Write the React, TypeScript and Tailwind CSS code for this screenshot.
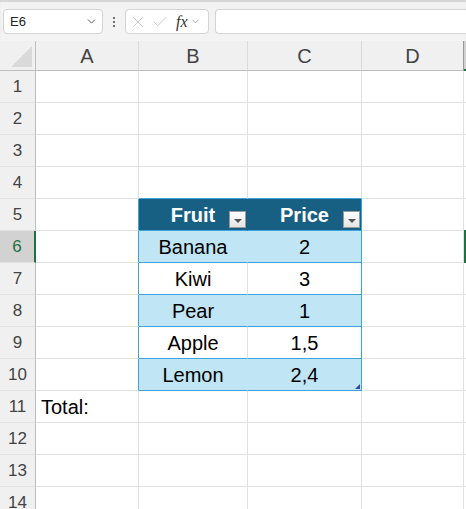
import { ChevronDown, X, Check } from "lucide-react";

const FONT = { fontFamily: '"Liberation Sans", Arial, sans-serif' };

const rows = [1, 2, 3, 4, 5, 6, 7, 8, 9, 10, 11, 12, 13, 14];

const data: Record<number, [string, string]> = {
  6: ["Banana", "2"],
  7: ["Kiwi", "3"],
  8: ["Pear", "1"],
  9: ["Apple", "1,5"],
  10: ["Lemon", "2,4"],
};

function FilterButton() {
  return (
    <span className="absolute right-[1px] bottom-[2px] flex h-[17px] w-[17px] items-center justify-center border border-[#9a9a9a] bg-gradient-to-b from-white to-[#e4e4e4]">
      <span className="mt-[3px] h-0 w-0 border-x-[4px] border-t-[4px] border-x-transparent border-t-[#555]" />
    </span>
  );
}

function Row({ n }: { n: number }) {
  const inTable = n >= 5 && n <= 10;
  const header = n === 5;
  const banded = n === 6 || n === 8 || n === 10;
  const selected = n === 6;
  const values = data[n];

  const tableBg = header ? "bg-[#175f83]" : banded ? "bg-[#c0e5f5]" : "bg-white";
  const bBorderB = inTable || n === 4 ? "border-b-[#3fa3db]" : "border-b-[#e1e1e1]";
  const bBorderR = header
    ? "border-r-[#175f83]"
    : banded
      ? "border-r-[#c0e5f5]"
      : "border-r-[#e1e1e1]";

  return (
    <div className="flex h-[32px]">
      <div
        className={`flex w-[36px] shrink-0 items-center justify-center border-b border-b-[#e1e1e1] text-[17px] ${
          selected
            ? "border-r-2 border-r-[#1e7145] bg-[#d2d2d2] text-[#1e7145]"
            : "border-r border-r-[#bdbdbd] bg-[#f0f0f0] text-[#444]"
        }`}
      >
        {n}
      </div>
      <div
        className={`flex w-[103px] shrink-0 items-center border-b border-b-[#e1e1e1] border-r pl-[5px] text-[20px] text-black ${
          inTable ? "border-r-[#3fa3db]" : "border-r-[#e1e1e1]"
        }`}
      >
        {n === 11 ? "Total:" : ""}
      </div>
      <div
        className={`relative flex w-[109px] shrink-0 items-center justify-center border-b border-r text-[20px] ${tableBg} ${bBorderB} ${bBorderR} ${
          header ? "font-bold text-white" : "text-black"
        }`}
      >
        {header ? "Fruit" : values ? values[0] : ""}
        {header && <FilterButton />}
      </div>
      <div
        className={`relative flex w-[114px] shrink-0 items-center justify-center border-b border-r text-[20px] ${tableBg} ${bBorderB} ${
          inTable ? "border-r-[#3fa3db]" : "border-r-[#e1e1e1]"
        } ${header ? "font-bold text-white" : "text-black"}`}
      >
        {header ? "Price" : values ? values[1] : ""}
        {header && <FilterButton />}
        {n === 10 && (
          <span className="absolute right-[1px] bottom-[1px] h-0 w-0 border-l-[5px] border-b-[5px] border-l-transparent border-b-[#3b45a8]" />
        )}
      </div>
      <div className="w-[102px] shrink-0 border-b border-r border-b-[#e1e1e1] border-r-[#e1e1e1]" />
      {selected ? (
        <div className="-mt-px h-[33px] flex-1 border-y-2 border-l-2 border-[#1e7145]" />
      ) : (
        <div className="flex-1 border-b border-b-[#e1e1e1]" />
      )}
    </div>
  );
}

export default function App() {
  return (
    <div className="h-[509px] w-[466px] overflow-hidden bg-white" style={FONT}>
      {/* formula bar */}
      <div className="flex h-[41px] items-start bg-[#f3f3f3] pt-[9px] shadow-[inset_0_2px_1px_#d6d6d6]">
        <div className="ml-[3px] flex h-[25px] w-[100px] items-center justify-between rounded-[4px] border border-[#d3d3d3] bg-white pl-[6px] pr-[4px] text-[13px] text-[#222]">
          <span>E6</span>
          <ChevronDown size={13} strokeWidth={1.6} className="text-[#444]" />
        </div>
        <div className="flex h-[25px] w-[22px] flex-col items-center justify-center gap-[2px]">
          <span className="h-[2px] w-[2px] rounded-full bg-[#444]" />
          <span className="h-[2px] w-[2px] rounded-full bg-[#444]" />
          <span className="h-[2px] w-[2px] rounded-full bg-[#444]" />
        </div>
        <div className="flex h-[25px] w-[84px] items-center rounded-[4px] border border-[#d3d3d3] bg-white pl-[3px] text-[#bdbdbd]">
          <X size={18} strokeWidth={1.1} />
          <Check size={18} strokeWidth={1.1} className="ml-[4px]" />
          <span
            className="ml-[7px] text-[16px] italic text-[#333]"
            style={{ fontFamily: '"Liberation Serif", serif' }}
          >
            fx
          </span>
          <ChevronDown size={11} strokeWidth={1.5} className="ml-[2px] text-[#888]" />
        </div>
        <div className="ml-[6px] h-[25px] flex-1 rounded-l-[4px] border border-r-0 border-[#d3d3d3] bg-white" />
      </div>

      {/* column headers */}
      <div className="flex h-[30px] bg-[#f0f0f0] text-[20px] text-[#444]">
        <div className="flex w-[36px] shrink-0 items-end justify-end border-b border-r border-b-[#bdbdbd] border-r-[#bdbdbd] pb-[3px] pr-[3px]">
          <span className="h-0 w-0 border-b-[21px] border-l-[21px] border-b-[#d9d9d9] border-l-transparent" />
        </div>
        <div className="flex w-[103px] shrink-0 items-center justify-center border-b border-r border-b-[#bdbdbd] border-r-[#dadada]">
          A
        </div>
        <div className="flex w-[109px] shrink-0 items-center justify-center border-b border-r border-b-[#bdbdbd] border-r-[#dadada]">
          B
        </div>
        <div className="flex w-[114px] shrink-0 items-center justify-center border-b border-r border-b-[#bdbdbd] border-r-[#dadada]">
          C
        </div>
        <div className="flex w-[102px] shrink-0 items-center justify-center border-b border-r border-b-[#bdbdbd] border-r-[#9a9a9a]">
          D
        </div>
        <div className="flex-1 border-b-2 border-b-[#1e7145] bg-[#d2d2d2]" />
      </div>

      {rows.map((n) => (
        <Row key={n} n={n} />
      ))}
    </div>
  );
}
